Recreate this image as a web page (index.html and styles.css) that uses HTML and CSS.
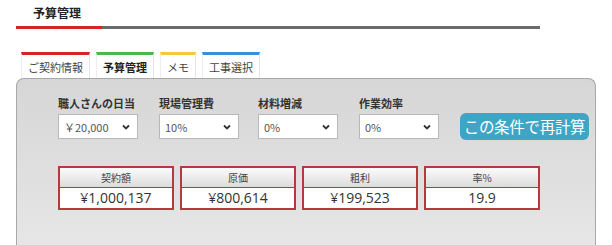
FILE: index.html
```html
<!DOCTYPE html>
<html lang="ja">
<head>
<meta charset="utf-8">
<link rel="stylesheet" href="styles.css">
</head>
<body>
<div class="header">
  <h1 class="title">予算管理</h1>
  <div class="rule"></div>
</div>
<div class="tabs">
  <div class="tab red">ご契約情報</div>
  <div class="tab green active">予算管理</div>
  <div class="tab yellow">メモ</div>
  <div class="tab blue">工事選択</div>
</div>
<div class="panel">
  <div class="controls">
    <div class="field">
      <div class="label">職人さんの日当</div>
      <div class="select"><span>￥20,000</span><svg width="8" height="6" viewBox="0 0 8 6"><path d="M1 1.5 L4 4.5 L7 1.5" fill="none" stroke="#333" stroke-width="1.8"/></svg></div>
    </div>
    <div class="field">
      <div class="label">現場管理費</div>
      <div class="select"><span>10%</span><svg width="8" height="6" viewBox="0 0 8 6"><path d="M1 1.5 L4 4.5 L7 1.5" fill="none" stroke="#333" stroke-width="1.8"/></svg></div>
    </div>
    <div class="field">
      <div class="label">材料増減</div>
      <div class="select"><span>0%</span><svg width="8" height="6" viewBox="0 0 8 6"><path d="M1 1.5 L4 4.5 L7 1.5" fill="none" stroke="#333" stroke-width="1.8"/></svg></div>
    </div>
    <div class="field">
      <div class="label">作業効率</div>
      <div class="select"><span>0%</span><svg width="8" height="6" viewBox="0 0 8 6"><path d="M1 1.5 L4 4.5 L7 1.5" fill="none" stroke="#333" stroke-width="1.8"/></svg></div>
    </div>
    <button class="recalc">この条件で再計算</button>
  </div>
  <div class="results">
    <div class="box"><div class="head">契約額</div><div class="value">¥1,000,137</div></div>
    <div class="box"><div class="head">原価</div><div class="value">¥800,614</div></div>
    <div class="box"><div class="head">粗利</div><div class="value">¥199,523</div></div>
    <div class="box"><div class="head">率%</div><div class="value">19.9</div></div>
  </div>
</div>
</body>
</html>
```
FILE: styles.css
```css
* { box-sizing: border-box; }
html, body { margin: 0; padding: 0; background: #fff; }
body {
  font-family: "Noto Sans CJK JP", "Noto Sans", sans-serif;
  color: #333;
  width: 612px;
  height: 245px;
  overflow: hidden;
}
.header { padding: 4px 0 0 16px; }
.title {
  margin: 0 0 0 17px;
  font-size: 12px;
  font-weight: bold;
  line-height: 18px;
  color: #222;
}
.rule {
  margin-top: 4px;
  width: 524px;
  height: 3px;
  background: linear-gradient(to right, #d8232a 0 86px, #6b6b6b 86px);
}
.tabs {
  display: flex;
  gap: 6px;
  margin: 23px 0 0 21px;
  height: 26px;
}
.tab {
  height: 26px;
  padding: 4px 6px 0;
  border-top: 3px solid #ccc;
  border-left: 1px solid #eee;
  border-right: 1px solid #e4e4e4;
  font-size: 11px;
  line-height: 17px;
  color: #444;
  background: #fff;
}
.tab.red { border-top-color: #d8232a; }
.tab.green { border-top-color: #4bb84b; }
.tab.yellow { border-top-color: #f5c842; }
.tab.blue { border-top-color: #3a8fd8; }
.tab.active { font-weight: bold; color: #222; }
.panel {
  margin: 0 16px;
  height: 167px;
  border: 1px solid #a8a8a8;
  border-bottom: none;
  border-radius: 8px 8px 0 0;
  background: linear-gradient(to bottom, #d6d6d6, #e6e6e6);
  padding: 16px 0 0 41px;
}
.controls {
  display: flex;
  align-items: flex-end;
}
.field { width: 101px; }
.field:nth-child(2) { width: 99px; }
.label {
  font-size: 11px;
  font-weight: bold;
  line-height: 16px;
  color: #333;
  margin-bottom: 3px;
}
.select {
  width: 80px;
  height: 25px;
  background: #fff;
  border: 1px solid #b8b8b8;
  display: flex;
  align-items: center;
  justify-content: space-between;
  padding: 0 7px 0 5px;
  font-size: 11px;
  color: #555;
}
.recalc {
  margin-bottom: -1px;
  width: 129px;
  height: 27px;
  border: none;
  border-radius: 6px;
  background: #3ea5c6;
  color: #fff;
  font-family: "Noto Sans CJK JP", sans-serif;
  font-size: 15.5px;
  line-height: 27px;
  padding: 0;
  letter-spacing: -0.3px;
}
.results {
  display: flex;
  gap: 6px;
  margin-top: 27px;
}
.box {
  width: 116px;
  border: 2px solid #b5393d;
}
.head {
  height: 20px;
  border-bottom: 1px solid #b5393d;
  background: linear-gradient(to bottom, #fbfbfb, #dcdcdc);
  text-align: center;
  font-size: 10px;
  line-height: 19px;
  color: #444;
}
.value {
  height: 20px;
  background: #fff;
  text-align: center;
  font-family: "Open Sans", "Noto Sans CJK JP", sans-serif;
  font-size: 14px;
  line-height: 20px;
  color: #333;
}
```
